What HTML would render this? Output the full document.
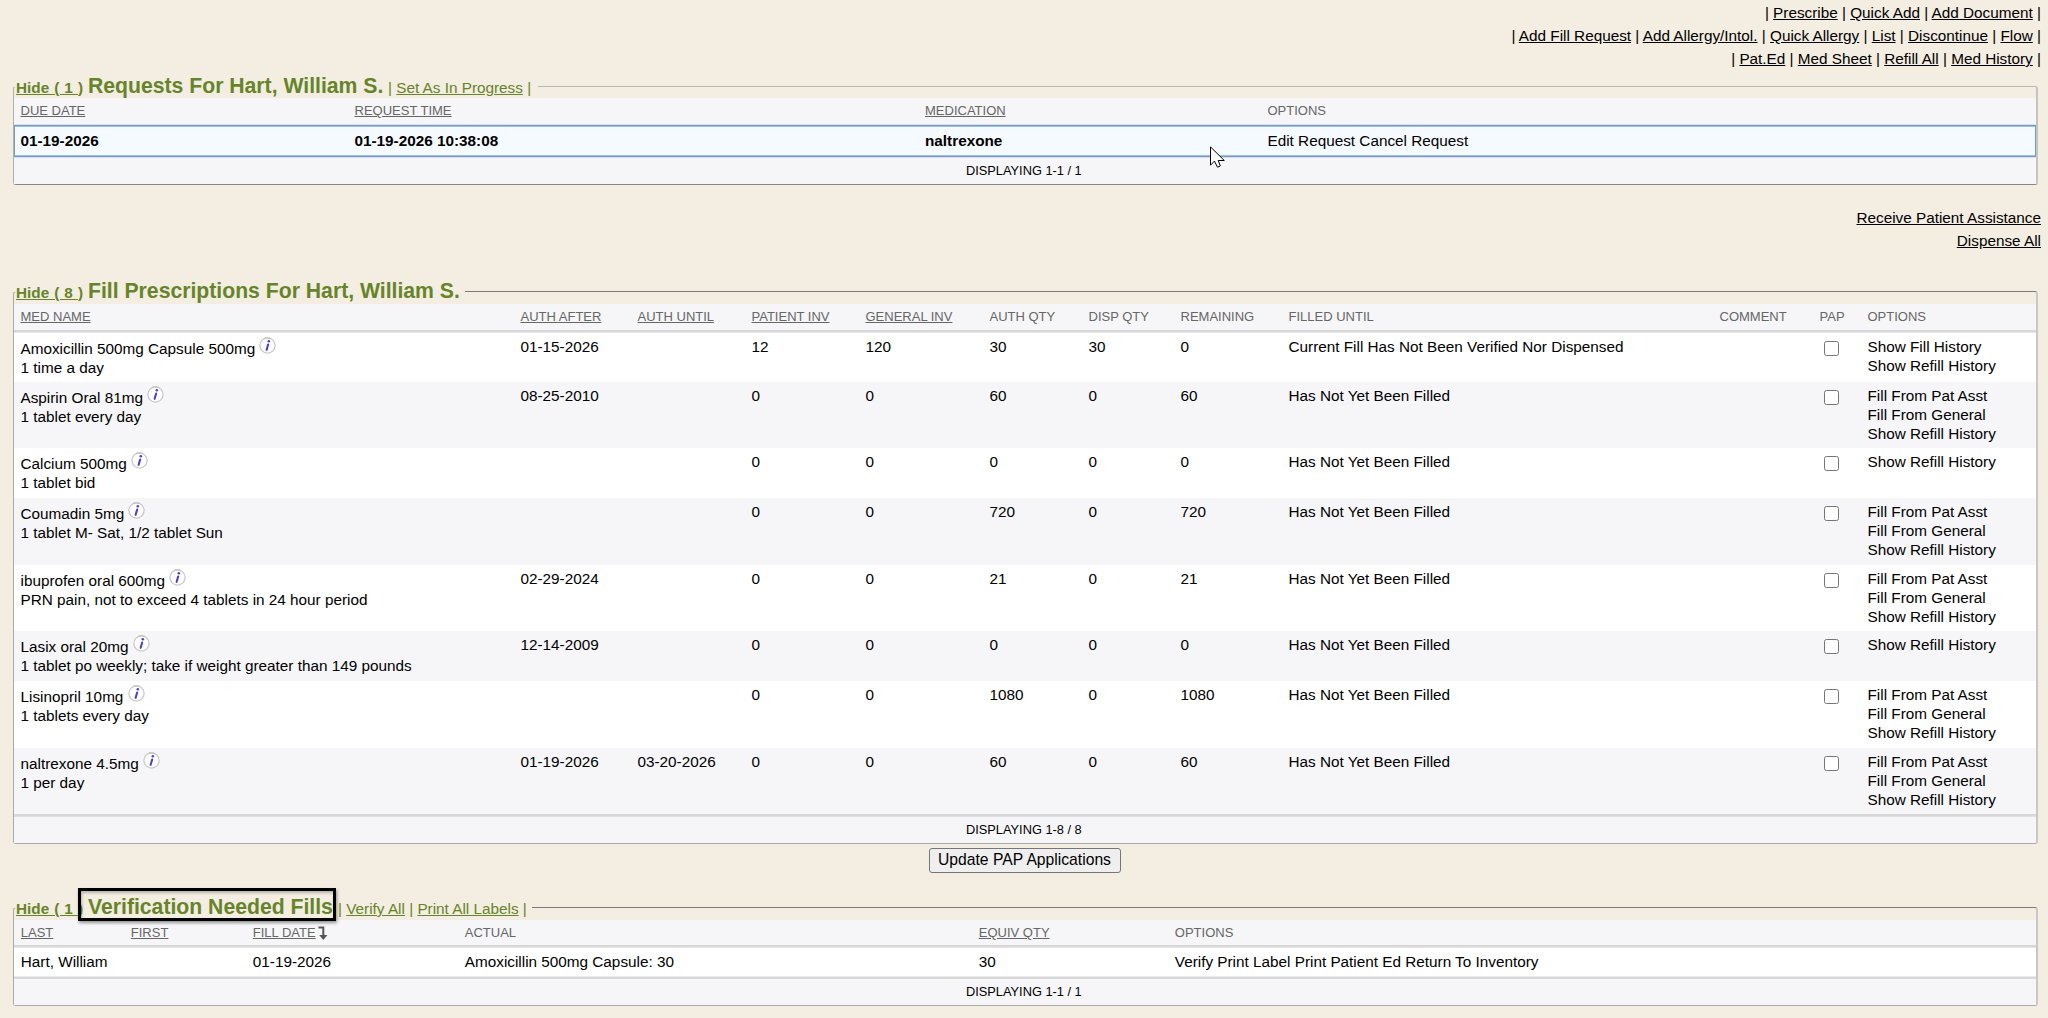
<!DOCTYPE html>
<html><head><meta charset="utf-8"><style>
html,body{margin:0;padding:0}
body{width:2048px;height:1018px;overflow:hidden;background:#f4ede1;position:relative;font-family:"Liberation Sans",sans-serif}
.t{position:absolute;white-space:nowrap;line-height:20px;font-family:"Liberation Sans",sans-serif}
.ic{vertical-align:baseline;margin-left:0}
</style></head><body>
<div class="t" style="right:7px;top:3px;font-size:15.3px;color:#000;text-align:right">| <u>Prescribe</u> | <u>Quick Add</u> | <u>Add Document</u> |</div>
<div class="t" style="right:7px;top:26px;font-size:15.3px;color:#000;text-align:right">| <u>Add Fill Request</u> | <u>Add Allergy/Intol.</u> | <u>Quick Allergy</u> | <u>List</u> | <u>Discontinue</u> | <u>Flow</u> |</div>
<div class="t" style="right:7px;top:49px;font-size:15.3px;color:#000;text-align:right">| <u>Pat.Ed</u> | <u>Med Sheet</u> | <u>Refill All</u> | <u>Med History</u> |</div>
<div style="position:absolute;left:13px;top:86px;width:2022px;height:97px;border-style:solid;border-width:1px 2px 1px 1px;border-color:#b9b9b5 #c4c4c0 #878787 #b0b0b0;border-radius:3px;"></div>
<div style="position:absolute;left:14px;top:85px;width:524px;height:2px;background:#f4ede1;"></div>
<div style="position:absolute;left:14px;top:98px;width:2022px;height:86px;background:#f6f6f8;"></div>
<div style="position:absolute;left:14px;top:124px;width:2022px;height:1px;background:#e3dfdb;"></div>
<div style="position:absolute;left:14px;top:157px;width:2022px;height:1px;background:#e0ddda;"></div>
<div style="position:absolute;left:14px;top:125px;width:2020px;height:30px;background:#f5faff;border:1px solid #6d9dd2;"></div>
<div style="position:absolute;left:15px;top:126px;width:2020px;height:1px;background:#9cbfe6;"></div>
<div style="position:absolute;left:15px;top:155px;width:2020px;height:1px;background:#9cbfe6;"></div>
<div class="t" style="left:16px;top:78px;font-size:15.3px;font-weight:700;color:#66842a;word-spacing:0.8px;"><u>Hide ( 1 </u>)</div>
<div class="t" style="left:88px;top:76px;font-size:21.2px;font-weight:700;color:#66842a;">Requests For Hart, William S.</div>
<div class="t" style="left:388px;top:78px;font-size:15.3px;font-weight:400;color:#66842a;">| <u>Set As In Progress</u> |</div>
<div class="t" style="left:20.5px;top:101px;font-size:13.0px;font-weight:400;color:#666666;text-decoration:underline;">DUE DATE</div>
<div class="t" style="left:354.5px;top:101px;font-size:13.0px;font-weight:400;color:#666666;text-decoration:underline;">REQUEST TIME</div>
<div class="t" style="left:925px;top:101px;font-size:13.0px;font-weight:400;color:#666666;text-decoration:underline;">MEDICATION</div>
<div class="t" style="left:1267.5px;top:101px;font-size:13.0px;font-weight:400;color:#666666;">OPTIONS</div>
<div class="t" style="left:20.5px;top:131px;font-size:15.3px;font-weight:700;color:#000;">01-19-2026</div>
<div class="t" style="left:354.5px;top:131px;font-size:15.3px;font-weight:700;color:#000;">01-19-2026 10:38:08</div>
<div class="t" style="left:925px;top:131px;font-size:15.3px;font-weight:700;color:#000;">naltrexone</div>
<div class="t" style="left:1267.5px;top:131px;font-size:15.3px;font-weight:400;color:#000;">Edit Request Cancel Request</div>
<div class="t" style="left:966px;top:161px;font-size:12.8px;font-weight:400;color:#000;">DISPLAYING 1-1 / 1</div>
<div class="t" style="right:7px;top:208px;font-size:15.3px;color:#000;text-align:right"><u>Receive Patient Assistance</u></div>
<div class="t" style="right:7px;top:231px;font-size:15.3px;color:#000;text-align:right"><u>Dispense All</u></div>
<div style="position:absolute;left:13px;top:291px;width:2022px;height:551px;border-style:solid;border-width:1px 2px 1px 1px;border-color:#7a7a7a #c8c8c4 #aaaaaa #aaaaaa;border-radius:3px;"></div>
<div style="position:absolute;left:14px;top:290px;width:451px;height:2px;background:#f4ede1;"></div>
<div style="position:absolute;left:14px;top:304px;width:2022px;height:539px;background:#f6f6f8;"></div>
<div style="position:absolute;left:14px;top:330px;width:2022px;height:2px;background:#d8d8d8;"></div>
<div style="position:absolute;left:14px;top:332px;width:2022px;height:1px;background:#e6e6e6;"></div>
<div style="position:absolute;left:14px;top:814px;width:2022px;height:2px;background:#d8d8d8;"></div>
<div style="position:absolute;left:14px;top:816px;width:2022px;height:1px;background:#e0e0e0;"></div>
<div class="t" style="left:16px;top:283px;font-size:15.3px;font-weight:700;color:#66842a;word-spacing:0.8px;"><u>Hide ( 8 </u>)</div>
<div class="t" style="left:88px;top:281px;font-size:21.2px;font-weight:700;color:#66842a;">Fill Prescriptions For Hart, William S.</div>
<div class="t" style="left:20.5px;top:307px;font-size:13.0px;font-weight:400;color:#666666;text-decoration:underline;">MED NAME</div>
<div class="t" style="left:520.5px;top:307px;font-size:13.0px;font-weight:400;color:#666666;text-decoration:underline;">AUTH AFTER</div>
<div class="t" style="left:637.5px;top:307px;font-size:13.0px;font-weight:400;color:#666666;text-decoration:underline;">AUTH UNTIL</div>
<div class="t" style="left:751.5px;top:307px;font-size:13.0px;font-weight:400;color:#666666;text-decoration:underline;">PATIENT INV</div>
<div class="t" style="left:865.5px;top:307px;font-size:13.0px;font-weight:400;color:#666666;text-decoration:underline;">GENERAL INV</div>
<div class="t" style="left:989.5px;top:307px;font-size:13.0px;font-weight:400;color:#666666;">AUTH QTY</div>
<div class="t" style="left:1088.5px;top:307px;font-size:13.0px;font-weight:400;color:#666666;">DISP QTY</div>
<div class="t" style="left:1180.5px;top:307px;font-size:13.0px;font-weight:400;color:#666666;">REMAINING</div>
<div class="t" style="left:1288.5px;top:307px;font-size:13.0px;font-weight:400;color:#666666;">FILLED UNTIL</div>
<div class="t" style="left:1719.5px;top:307px;font-size:13.0px;font-weight:400;color:#666666;">COMMENT</div>
<div class="t" style="left:1819.5px;top:307px;font-size:13.0px;font-weight:400;color:#666666;">PAP</div>
<div class="t" style="left:1867.5px;top:307px;font-size:13.0px;font-weight:400;color:#666666;">OPTIONS</div>
<div style="position:absolute;left:14px;top:333px;width:2022px;height:49px;background:#ffffff;"></div>
<div class="t" style="left:20.5px;top:337px;font-size:15.3px">Amoxicillin 500mg Capsule 500mg <svg class="ic" width="17" height="17" viewBox="0 0 17 17"><circle cx="8.5" cy="8.5" r="7.6" fill="#fff" stroke="#c9c9c9" stroke-width="1.3"/><path d="M5.6 1.0 H11.4" stroke="#b0b0b0" stroke-width="0.7"/><circle cx="9.8" cy="4.3" r="1.25" fill="#4c3fd6"/><path d="M9.2 7.4 L7.6 12.9" stroke="#4c3fd6" stroke-width="2.0" stroke-linecap="round"/></svg></div>
<div class="t" style="left:20.5px;top:358px;font-size:15.3px;font-weight:400;color:#000;">1 time a day</div>
<div class="t" style="left:520.5px;top:337px;font-size:15.3px;font-weight:400;color:#000;">01-15-2026</div>
<div class="t" style="left:751.5px;top:337px;font-size:15.3px;font-weight:400;color:#000;">12</div>
<div class="t" style="left:865.5px;top:337px;font-size:15.3px;font-weight:400;color:#000;">120</div>
<div class="t" style="left:989.5px;top:337px;font-size:15.3px;font-weight:400;color:#000;">30</div>
<div class="t" style="left:1088.5px;top:337px;font-size:15.3px;font-weight:400;color:#000;">30</div>
<div class="t" style="left:1180.5px;top:337px;font-size:15.3px;font-weight:400;color:#000;">0</div>
<div class="t" style="left:1288.5px;top:337px;font-size:15.3px;font-weight:400;color:#000;">Current Fill Has Not Been Verified Nor Dispensed</div>
<div class="t" style="left:1867.5px;top:337px;font-size:15.3px;font-weight:400;color:#000;">Show Fill History</div>
<div class="t" style="left:1867.5px;top:356px;font-size:15.3px;font-weight:400;color:#000;">Show Refill History</div>
<div style="position:absolute;left:1824px;top:341px;width:13px;height:13px;background:#fff;border:1px solid #767676;border-radius:2.5px;"></div>
<div class="t" style="left:20.5px;top:386px;font-size:15.3px">Aspirin Oral 81mg <svg class="ic" width="17" height="17" viewBox="0 0 17 17"><circle cx="8.5" cy="8.5" r="7.6" fill="#fff" stroke="#c9c9c9" stroke-width="1.3"/><path d="M5.6 1.0 H11.4" stroke="#b0b0b0" stroke-width="0.7"/><circle cx="9.8" cy="4.3" r="1.25" fill="#4c3fd6"/><path d="M9.2 7.4 L7.6 12.9" stroke="#4c3fd6" stroke-width="2.0" stroke-linecap="round"/></svg></div>
<div class="t" style="left:20.5px;top:407px;font-size:15.3px;font-weight:400;color:#000;">1 tablet every day</div>
<div class="t" style="left:520.5px;top:386px;font-size:15.3px;font-weight:400;color:#000;">08-25-2010</div>
<div class="t" style="left:751.5px;top:386px;font-size:15.3px;font-weight:400;color:#000;">0</div>
<div class="t" style="left:865.5px;top:386px;font-size:15.3px;font-weight:400;color:#000;">0</div>
<div class="t" style="left:989.5px;top:386px;font-size:15.3px;font-weight:400;color:#000;">60</div>
<div class="t" style="left:1088.5px;top:386px;font-size:15.3px;font-weight:400;color:#000;">0</div>
<div class="t" style="left:1180.5px;top:386px;font-size:15.3px;font-weight:400;color:#000;">60</div>
<div class="t" style="left:1288.5px;top:386px;font-size:15.3px;font-weight:400;color:#000;">Has Not Yet Been Filled</div>
<div class="t" style="left:1867.5px;top:386px;font-size:15.3px;font-weight:400;color:#000;">Fill From Pat Asst</div>
<div class="t" style="left:1867.5px;top:405px;font-size:15.3px;font-weight:400;color:#000;">Fill From General</div>
<div class="t" style="left:1867.5px;top:424px;font-size:15.3px;font-weight:400;color:#000;">Show Refill History</div>
<div style="position:absolute;left:1824px;top:390px;width:13px;height:13px;background:#fff;border:1px solid #767676;border-radius:2.5px;"></div>
<div style="position:absolute;left:14px;top:448px;width:2022px;height:50px;background:#ffffff;"></div>
<div class="t" style="left:20.5px;top:452px;font-size:15.3px">Calcium 500mg <svg class="ic" width="17" height="17" viewBox="0 0 17 17"><circle cx="8.5" cy="8.5" r="7.6" fill="#fff" stroke="#c9c9c9" stroke-width="1.3"/><path d="M5.6 1.0 H11.4" stroke="#b0b0b0" stroke-width="0.7"/><circle cx="9.8" cy="4.3" r="1.25" fill="#4c3fd6"/><path d="M9.2 7.4 L7.6 12.9" stroke="#4c3fd6" stroke-width="2.0" stroke-linecap="round"/></svg></div>
<div class="t" style="left:20.5px;top:473px;font-size:15.3px;font-weight:400;color:#000;">1 tablet bid</div>
<div class="t" style="left:751.5px;top:452px;font-size:15.3px;font-weight:400;color:#000;">0</div>
<div class="t" style="left:865.5px;top:452px;font-size:15.3px;font-weight:400;color:#000;">0</div>
<div class="t" style="left:989.5px;top:452px;font-size:15.3px;font-weight:400;color:#000;">0</div>
<div class="t" style="left:1088.5px;top:452px;font-size:15.3px;font-weight:400;color:#000;">0</div>
<div class="t" style="left:1180.5px;top:452px;font-size:15.3px;font-weight:400;color:#000;">0</div>
<div class="t" style="left:1288.5px;top:452px;font-size:15.3px;font-weight:400;color:#000;">Has Not Yet Been Filled</div>
<div class="t" style="left:1867.5px;top:452px;font-size:15.3px;font-weight:400;color:#000;">Show Refill History</div>
<div style="position:absolute;left:1824px;top:456px;width:13px;height:13px;background:#fff;border:1px solid #767676;border-radius:2.5px;"></div>
<div class="t" style="left:20.5px;top:502px;font-size:15.3px">Coumadin 5mg <svg class="ic" width="17" height="17" viewBox="0 0 17 17"><circle cx="8.5" cy="8.5" r="7.6" fill="#fff" stroke="#c9c9c9" stroke-width="1.3"/><path d="M5.6 1.0 H11.4" stroke="#b0b0b0" stroke-width="0.7"/><circle cx="9.8" cy="4.3" r="1.25" fill="#4c3fd6"/><path d="M9.2 7.4 L7.6 12.9" stroke="#4c3fd6" stroke-width="2.0" stroke-linecap="round"/></svg></div>
<div class="t" style="left:20.5px;top:523px;font-size:15.3px;font-weight:400;color:#000;">1 tablet M- Sat, 1/2 tablet Sun</div>
<div class="t" style="left:751.5px;top:502px;font-size:15.3px;font-weight:400;color:#000;">0</div>
<div class="t" style="left:865.5px;top:502px;font-size:15.3px;font-weight:400;color:#000;">0</div>
<div class="t" style="left:989.5px;top:502px;font-size:15.3px;font-weight:400;color:#000;">720</div>
<div class="t" style="left:1088.5px;top:502px;font-size:15.3px;font-weight:400;color:#000;">0</div>
<div class="t" style="left:1180.5px;top:502px;font-size:15.3px;font-weight:400;color:#000;">720</div>
<div class="t" style="left:1288.5px;top:502px;font-size:15.3px;font-weight:400;color:#000;">Has Not Yet Been Filled</div>
<div class="t" style="left:1867.5px;top:502px;font-size:15.3px;font-weight:400;color:#000;">Fill From Pat Asst</div>
<div class="t" style="left:1867.5px;top:521px;font-size:15.3px;font-weight:400;color:#000;">Fill From General</div>
<div class="t" style="left:1867.5px;top:540px;font-size:15.3px;font-weight:400;color:#000;">Show Refill History</div>
<div style="position:absolute;left:1824px;top:506px;width:13px;height:13px;background:#fff;border:1px solid #767676;border-radius:2.5px;"></div>
<div style="position:absolute;left:14px;top:565px;width:2022px;height:66px;background:#ffffff;"></div>
<div class="t" style="left:20.5px;top:569px;font-size:15.3px">ibuprofen oral 600mg <svg class="ic" width="17" height="17" viewBox="0 0 17 17"><circle cx="8.5" cy="8.5" r="7.6" fill="#fff" stroke="#c9c9c9" stroke-width="1.3"/><path d="M5.6 1.0 H11.4" stroke="#b0b0b0" stroke-width="0.7"/><circle cx="9.8" cy="4.3" r="1.25" fill="#4c3fd6"/><path d="M9.2 7.4 L7.6 12.9" stroke="#4c3fd6" stroke-width="2.0" stroke-linecap="round"/></svg></div>
<div class="t" style="left:20.5px;top:590px;font-size:15.3px;font-weight:400;color:#000;">PRN pain, not to exceed 4 tablets in 24 hour period</div>
<div class="t" style="left:520.5px;top:569px;font-size:15.3px;font-weight:400;color:#000;">02-29-2024</div>
<div class="t" style="left:751.5px;top:569px;font-size:15.3px;font-weight:400;color:#000;">0</div>
<div class="t" style="left:865.5px;top:569px;font-size:15.3px;font-weight:400;color:#000;">0</div>
<div class="t" style="left:989.5px;top:569px;font-size:15.3px;font-weight:400;color:#000;">21</div>
<div class="t" style="left:1088.5px;top:569px;font-size:15.3px;font-weight:400;color:#000;">0</div>
<div class="t" style="left:1180.5px;top:569px;font-size:15.3px;font-weight:400;color:#000;">21</div>
<div class="t" style="left:1288.5px;top:569px;font-size:15.3px;font-weight:400;color:#000;">Has Not Yet Been Filled</div>
<div class="t" style="left:1867.5px;top:569px;font-size:15.3px;font-weight:400;color:#000;">Fill From Pat Asst</div>
<div class="t" style="left:1867.5px;top:588px;font-size:15.3px;font-weight:400;color:#000;">Fill From General</div>
<div class="t" style="left:1867.5px;top:607px;font-size:15.3px;font-weight:400;color:#000;">Show Refill History</div>
<div style="position:absolute;left:1824px;top:573px;width:13px;height:13px;background:#fff;border:1px solid #767676;border-radius:2.5px;"></div>
<div class="t" style="left:20.5px;top:635px;font-size:15.3px">Lasix oral 20mg <svg class="ic" width="17" height="17" viewBox="0 0 17 17"><circle cx="8.5" cy="8.5" r="7.6" fill="#fff" stroke="#c9c9c9" stroke-width="1.3"/><path d="M5.6 1.0 H11.4" stroke="#b0b0b0" stroke-width="0.7"/><circle cx="9.8" cy="4.3" r="1.25" fill="#4c3fd6"/><path d="M9.2 7.4 L7.6 12.9" stroke="#4c3fd6" stroke-width="2.0" stroke-linecap="round"/></svg></div>
<div class="t" style="left:20.5px;top:656px;font-size:15.3px;font-weight:400;color:#000;">1 tablet po weekly; take if weight greater than 149 pounds</div>
<div class="t" style="left:520.5px;top:635px;font-size:15.3px;font-weight:400;color:#000;">12-14-2009</div>
<div class="t" style="left:751.5px;top:635px;font-size:15.3px;font-weight:400;color:#000;">0</div>
<div class="t" style="left:865.5px;top:635px;font-size:15.3px;font-weight:400;color:#000;">0</div>
<div class="t" style="left:989.5px;top:635px;font-size:15.3px;font-weight:400;color:#000;">0</div>
<div class="t" style="left:1088.5px;top:635px;font-size:15.3px;font-weight:400;color:#000;">0</div>
<div class="t" style="left:1180.5px;top:635px;font-size:15.3px;font-weight:400;color:#000;">0</div>
<div class="t" style="left:1288.5px;top:635px;font-size:15.3px;font-weight:400;color:#000;">Has Not Yet Been Filled</div>
<div class="t" style="left:1867.5px;top:635px;font-size:15.3px;font-weight:400;color:#000;">Show Refill History</div>
<div style="position:absolute;left:1824px;top:639px;width:13px;height:13px;background:#fff;border:1px solid #767676;border-radius:2.5px;"></div>
<div style="position:absolute;left:14px;top:681px;width:2022px;height:67px;background:#ffffff;"></div>
<div class="t" style="left:20.5px;top:685px;font-size:15.3px">Lisinopril 10mg <svg class="ic" width="17" height="17" viewBox="0 0 17 17"><circle cx="8.5" cy="8.5" r="7.6" fill="#fff" stroke="#c9c9c9" stroke-width="1.3"/><path d="M5.6 1.0 H11.4" stroke="#b0b0b0" stroke-width="0.7"/><circle cx="9.8" cy="4.3" r="1.25" fill="#4c3fd6"/><path d="M9.2 7.4 L7.6 12.9" stroke="#4c3fd6" stroke-width="2.0" stroke-linecap="round"/></svg></div>
<div class="t" style="left:20.5px;top:706px;font-size:15.3px;font-weight:400;color:#000;">1 tablets every day</div>
<div class="t" style="left:751.5px;top:685px;font-size:15.3px;font-weight:400;color:#000;">0</div>
<div class="t" style="left:865.5px;top:685px;font-size:15.3px;font-weight:400;color:#000;">0</div>
<div class="t" style="left:989.5px;top:685px;font-size:15.3px;font-weight:400;color:#000;">1080</div>
<div class="t" style="left:1088.5px;top:685px;font-size:15.3px;font-weight:400;color:#000;">0</div>
<div class="t" style="left:1180.5px;top:685px;font-size:15.3px;font-weight:400;color:#000;">1080</div>
<div class="t" style="left:1288.5px;top:685px;font-size:15.3px;font-weight:400;color:#000;">Has Not Yet Been Filled</div>
<div class="t" style="left:1867.5px;top:685px;font-size:15.3px;font-weight:400;color:#000;">Fill From Pat Asst</div>
<div class="t" style="left:1867.5px;top:704px;font-size:15.3px;font-weight:400;color:#000;">Fill From General</div>
<div class="t" style="left:1867.5px;top:723px;font-size:15.3px;font-weight:400;color:#000;">Show Refill History</div>
<div style="position:absolute;left:1824px;top:689px;width:13px;height:13px;background:#fff;border:1px solid #767676;border-radius:2.5px;"></div>
<div class="t" style="left:20.5px;top:752px;font-size:15.3px">naltrexone 4.5mg <svg class="ic" width="17" height="17" viewBox="0 0 17 17"><circle cx="8.5" cy="8.5" r="7.6" fill="#fff" stroke="#c9c9c9" stroke-width="1.3"/><path d="M5.6 1.0 H11.4" stroke="#b0b0b0" stroke-width="0.7"/><circle cx="9.8" cy="4.3" r="1.25" fill="#4c3fd6"/><path d="M9.2 7.4 L7.6 12.9" stroke="#4c3fd6" stroke-width="2.0" stroke-linecap="round"/></svg></div>
<div class="t" style="left:20.5px;top:773px;font-size:15.3px;font-weight:400;color:#000;">1 per day</div>
<div class="t" style="left:520.5px;top:752px;font-size:15.3px;font-weight:400;color:#000;">01-19-2026</div>
<div class="t" style="left:637.5px;top:752px;font-size:15.3px;font-weight:400;color:#000;">03-20-2026</div>
<div class="t" style="left:751.5px;top:752px;font-size:15.3px;font-weight:400;color:#000;">0</div>
<div class="t" style="left:865.5px;top:752px;font-size:15.3px;font-weight:400;color:#000;">0</div>
<div class="t" style="left:989.5px;top:752px;font-size:15.3px;font-weight:400;color:#000;">60</div>
<div class="t" style="left:1088.5px;top:752px;font-size:15.3px;font-weight:400;color:#000;">0</div>
<div class="t" style="left:1180.5px;top:752px;font-size:15.3px;font-weight:400;color:#000;">60</div>
<div class="t" style="left:1288.5px;top:752px;font-size:15.3px;font-weight:400;color:#000;">Has Not Yet Been Filled</div>
<div class="t" style="left:1867.5px;top:752px;font-size:15.3px;font-weight:400;color:#000;">Fill From Pat Asst</div>
<div class="t" style="left:1867.5px;top:771px;font-size:15.3px;font-weight:400;color:#000;">Fill From General</div>
<div class="t" style="left:1867.5px;top:790px;font-size:15.3px;font-weight:400;color:#000;">Show Refill History</div>
<div style="position:absolute;left:1824px;top:756px;width:13px;height:13px;background:#fff;border:1px solid #767676;border-radius:2.5px;"></div>
<div class="t" style="left:966px;top:820px;font-size:12.8px;font-weight:400;color:#000;">DISPLAYING 1-8 / 8</div>
<div style="position:absolute;left:929px;top:848px;width:190px;height:23px;border:1px solid #767676;border-radius:3px;background:#efefef"></div>
<div class="t" style="left:938px;top:850px;font-size:15.7px;font-weight:400;color:#000;">Update PAP Applications</div>
<div style="position:absolute;left:13px;top:907px;width:2022px;height:97px;border-style:solid;border-width:1px 2px 1px 1px;border-color:#7a7a7a #c8c8c4 #aaaaaa #aaaaaa;border-radius:3px;"></div>
<div style="position:absolute;left:14px;top:906px;width:518px;height:2px;background:#f4ede1;"></div>
<div style="position:absolute;left:14px;top:920px;width:2022px;height:85px;background:#f6f6f8;"></div>
<div style="position:absolute;left:14px;top:945px;width:2022px;height:2px;background:#d8d8d8;"></div>
<div style="position:absolute;left:14px;top:947px;width:2022px;height:1px;background:#e6e6e6;"></div>
<div style="position:absolute;left:14px;top:948px;width:2022px;height:28px;background:#ffffff;"></div>
<div style="position:absolute;left:14px;top:976px;width:2022px;height:1px;background:#ebebeb;"></div>
<div style="position:absolute;left:14px;top:977px;width:2022px;height:2px;background:#d8d8d8;"></div>
<div class="t" style="left:16px;top:899px;font-size:15.3px;font-weight:700;color:#66842a;word-spacing:0.8px;"><u>Hide ( 1 </u>)</div>
<div class="t" style="left:88px;top:897px;font-size:21.2px;font-weight:700;color:#66842a;">Verification Needed Fills</div>
<div class="t" style="left:338px;top:899px;font-size:15.3px;font-weight:400;color:#66842a;">| <u>Verify All</u> | <u>Print All Labels</u> |</div>
<div style="position:absolute;left:78px;top:888px;width:252px;height:27px;border:3px solid #000;box-shadow:1px 2px 3px rgba(0,0,0,.4), inset 1px 2px 3px rgba(0,0,0,.25)"></div>
<div class="t" style="left:20.8px;top:923px;font-size:13.0px;font-weight:400;color:#666666;text-decoration:underline;">LAST</div>
<div class="t" style="left:130.8px;top:923px;font-size:13.0px;font-weight:400;color:#666666;text-decoration:underline;">FIRST</div>
<div class="t" style="left:252.8px;top:923px;font-size:13.0px;font-weight:400;color:#666666;text-decoration:underline;">FILL DATE</div>
<div class="t" style="left:464.8px;top:923px;font-size:13.0px;font-weight:400;color:#666666;">ACTUAL</div>
<div class="t" style="left:978.8px;top:923px;font-size:13.0px;font-weight:400;color:#666666;text-decoration:underline;">EQUIV QTY</div>
<div class="t" style="left:1174.8px;top:923px;font-size:13.0px;font-weight:400;color:#666666;">OPTIONS</div>
<svg style="position:absolute;left:317px;top:926px" width="12" height="15" viewBox="0 0 12 15"><path d="M1.5 1.5 H6.3 V9" stroke="#555" stroke-width="2" fill="none"/><path d="M2.2 9.0 H10.4 L6.3 14.0 Z" fill="#555"/></svg>
<div class="t" style="left:20.8px;top:952px;font-size:15.3px;font-weight:400;color:#000;">Hart, William</div>
<div class="t" style="left:252.8px;top:952px;font-size:15.3px;font-weight:400;color:#000;">01-19-2026</div>
<div class="t" style="left:464.8px;top:952px;font-size:15.3px;font-weight:400;color:#000;">Amoxicillin 500mg Capsule: 30</div>
<div class="t" style="left:978.8px;top:952px;font-size:15.3px;font-weight:400;color:#000;">30</div>
<div class="t" style="left:1174.8px;top:952px;font-size:15.3px;font-weight:400;color:#000;">Verify Print Label Print Patient Ed Return To Inventory</div>
<div class="t" style="left:966px;top:982px;font-size:12.8px;font-weight:400;color:#000;">DISPLAYING 1-1 / 1</div>
<svg style="position:absolute;left:1209px;top:145px" width="18" height="25" viewBox="0 0 18 25"><path d="M1.5 1.9 V20.2 L5.4 16.1 L8.5 22.2 L11.3 20.9 L9.2 15.5 L15.3 15.5 Z" fill="#fff" stroke="#000" stroke-width="1" stroke-linejoin="miter"/></svg>
</body></html>
